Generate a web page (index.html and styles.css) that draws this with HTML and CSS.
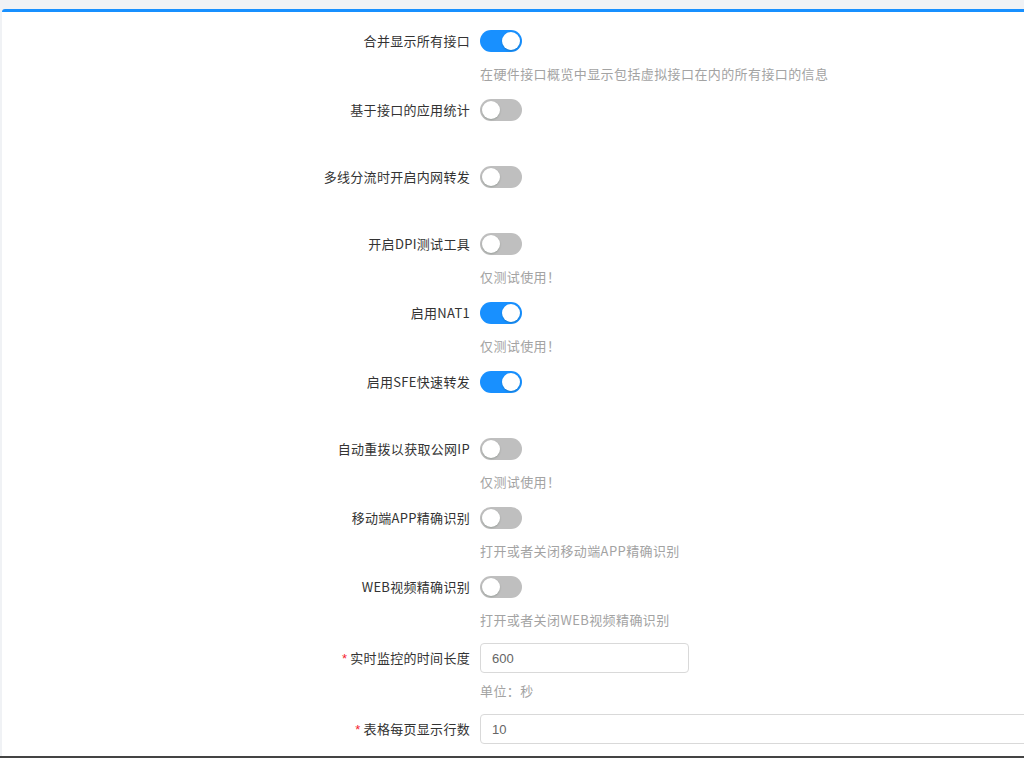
FILE: index.html
```html
<!DOCTYPE html>
<html lang="zh-CN">
<head>
    <meta charset="utf-8">
    <title>系统设置</title>
    <link rel="stylesheet" href="styles.css">
</head>
<body>
    <div class="page">
        <div class="card">
            <form class="settings">
                <div class="item">
                    <label class="item-label">合并显示所有接口</label>
                    <div class="item-control"><span class="switch on"></span></div>
                    <div class="item-extra">在硬件接口概览中显示包括虚拟接口在内的所有接口的信息</div>
                </div>
                <div class="item">
                    <label class="item-label">基于接口的应用统计</label>
                    <div class="item-control"><span class="switch"></span></div>
                    <div class="item-extra"></div>
                </div>
                <div class="item">
                    <label class="item-label">多线分流时开启内网转发</label>
                    <div class="item-control"><span class="switch"></span></div>
                    <div class="item-extra"></div>
                </div>
                <div class="item">
                    <label class="item-label">开启DPI测试工具</label>
                    <div class="item-control"><span class="switch"></span></div>
                    <div class="item-extra">仅测试使用！</div>
                </div>
                <div class="item">
                    <label class="item-label">启用NAT1</label>
                    <div class="item-control"><span class="switch on"></span></div>
                    <div class="item-extra">仅测试使用！</div>
                </div>
                <div class="item">
                    <label class="item-label">启用SFE快速转发</label>
                    <div class="item-control"><span class="switch on"></span></div>
                    <div class="item-extra"></div>
                </div>
                <div class="item">
                    <label class="item-label">自动重拨以获取公网IP</label>
                    <div class="item-control"><span class="switch"></span></div>
                    <div class="item-extra">仅测试使用！</div>
                </div>
                <div class="item">
                    <label class="item-label">移动端APP精确识别</label>
                    <div class="item-control"><span class="switch"></span></div>
                    <div class="item-extra">打开或者关闭移动端APP精确识别</div>
                </div>
                <div class="item">
                    <label class="item-label">WEB视频精确识别</label>
                    <div class="item-control"><span class="switch"></span></div>
                    <div class="item-extra">打开或者关闭WEB视频精确识别</div>
                </div>
                <div class="item input-item">
                    <label class="item-label required" for="monitorTime">实时监控的时间长度</label>
                    <div class="item-control"><input type="text" id="monitorTime" class="text-input" value="600"></div>
                    <div class="item-extra">单位：秒</div>
                </div>
                <div class="item input-item">
                    <label class="item-label required" for="pageRows">表格每页显示行数</label>
                    <div class="item-control"><input type="text" id="pageRows" class="text-input wide" value="10"></div>
                    <div class="item-extra"></div>
                </div>
            </form>
        </div>
        <div class="taskbar"></div>
    </div>
</body>
</html>
```

FILE: styles.css
```css
* {
    margin: 0;
    padding: 0;
    box-sizing: border-box;
}
body {
    font-family: 'Noto Sans CJK SC', 'Microsoft YaHei', sans-serif;
    font-size: 13px;
    background: #f0f2f5;
    color: #333;
    overflow: hidden;
}
.page {
    height: 758px;
    display: flex;
    flex-direction: column;
    padding-top: 9px;
}
.card {
    flex: 1;
    margin-left: 2px;
    background: #fff;
    border-top: 3px solid #1890ff;
    border-top-left-radius: 3px;
    padding-top: 9px;
    overflow: hidden;
}
.taskbar {
    height: 2px;
    background: #444;
}
.item {
    display: grid;
    grid-template-columns: 468px auto;
    column-gap: 10px;
    margin-bottom: 5px;
}
.input-item {
    padding-top: 2px;
}
.item-label {
    grid-column: 1;
    text-align: right;
    line-height: 40px;
    height: 40px;
    white-space: nowrap;
    color: #333;
    letter-spacing: 0.3px;
}
.item-label.required::before {
    content: '*';
    color: #f5222d;
    margin-right: 3px;
    font-family: 'Liberation Sans', sans-serif;
    font-size: 13px;
}
.item-control {
    grid-column: 2;
    height: 40px;
    display: flex;
    align-items: center;
}
.item-extra {
    grid-column: 2;
    height: 22px;
    line-height: 22px;
    color: #a3a3a3;
    letter-spacing: 0.4px;
    white-space: nowrap;
}
.item-extra:not(:empty) {
    margin-top: 2px;
}
.switch {
    position: relative;
    display: inline-block;
    width: 42px;
    height: 22px;
    border-radius: 11px;
    background: #bfbfbf;
}
.switch::after {
    content: '';
    position: absolute;
    top: 2px;
    left: 2px;
    width: 18px;
    height: 18px;
    border-radius: 50%;
    background: #fff;
    box-shadow: 0 1px 2px rgba(0, 35, 11, 0.2);
}
.switch.on {
    background: #1890ff;
}
.switch.on::after {
    left: 22px;
}
.text-input {
    width: 209px;
    height: 30px;
    padding: 0 11px;
    border: 1px solid #d9d9d9;
    border-radius: 4px;
    font-family: 'Liberation Sans', sans-serif;
    font-size: 13px;
    color: #666;
    background: #fff;
    outline: none;
}
.text-input.wide {
    width: 620px;
}
```
